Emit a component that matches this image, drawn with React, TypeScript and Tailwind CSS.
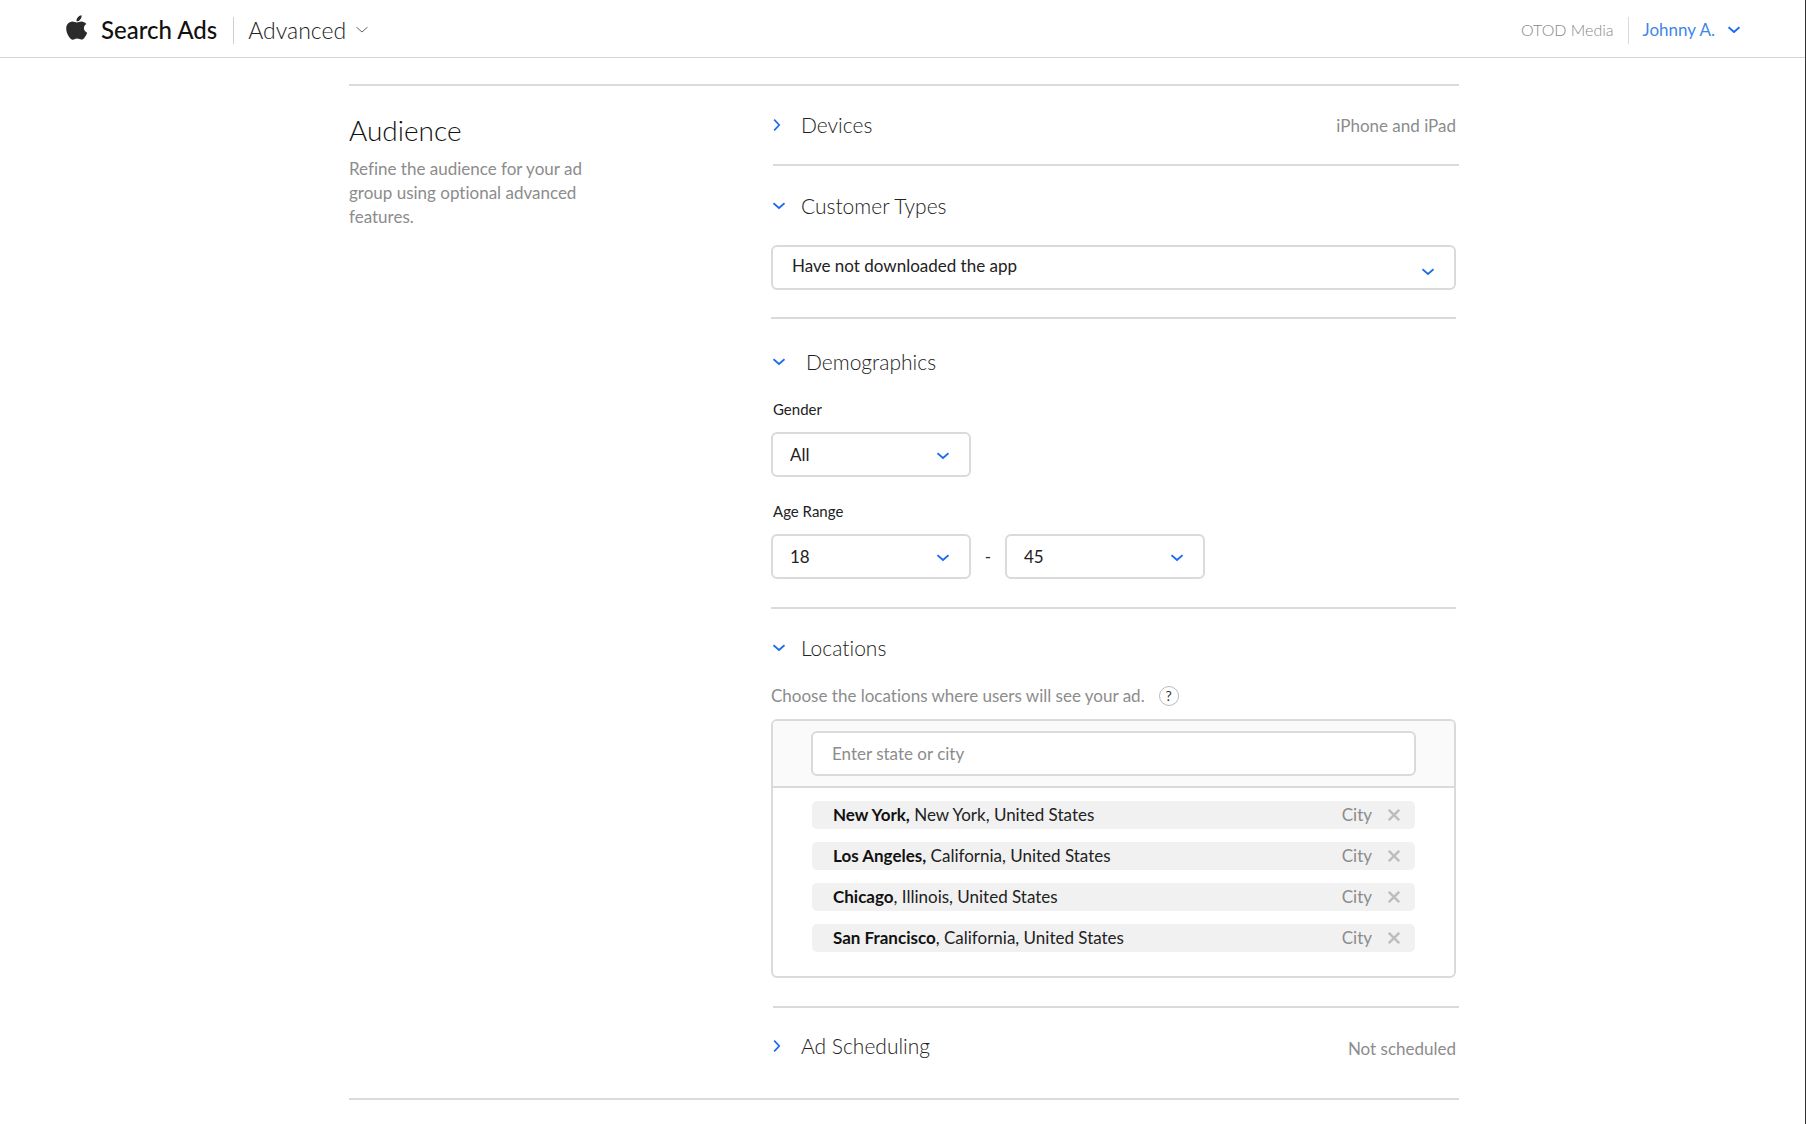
import React, { useState } from 'react'

type IconProps = { className?: string }

const AppleLogo = ({ className }: IconProps) => (
  <svg className={className} viewBox="0 0 22 26" fill="currentColor" aria-hidden="true">
    <path d="M15.6 0.2c0.2 1.6-0.4 3.1-1.3 4.2-1 1.2-2.4 2-3.8 1.9-0.2-1.5 0.5-3.1 1.4-4.1C12.800 1.100 14.400 0.300 15.600 0.200z" />
    <path d="M20.400 8.900c-1.600 1-2.500 2.400-2.500 4.200 0 2.100 1.200 3.800 3.200 4.600-0.400 1.300-1 2.500-1.800 3.700-1.100 1.600-2.200 3.200-4 3.200-1.700 0-2.200-1-4.200-1s-2.600 1-4.200 1.100c-1.700 0-3-1.700-4.100-3.300C0.500 18.100-1 12.300 1.600 8.900 2.800 7.300 4.600 6.400 6.400 6.400c1.800 0 3 1 4.500 1 1.500 0 2.400-1 4.500-1 1.900 0 3.800 0.900 5 2.500z" />
  </svg>
)

const ChevronDown = ({ className }: IconProps) => (
  <svg className={className} width="12" height="8" viewBox="0 0 12 8" fill="none" stroke="currentColor" aria-hidden="true">
    <path d="M0.500 1.200L6 6l5.500-4.800" />
  </svg>
)

const ChevronRight = ({ className }: IconProps) => (
  <svg className={className} width="8" height="12" viewBox="0 0 8 12" fill="none" stroke="currentColor" aria-hidden="true">
    <path d="M1.200 0.600L6.200 6l-5 5.400" />
  </svg>
)

const CloseIcon = () => (
  <svg width="12" height="12" viewBox="0 0 12 12" fill="none" stroke="currentColor" strokeWidth="2.4" aria-hidden="true">
    <path d="M0.800 0.800l10.400 10.400M11.200 0.800L0.800 11.200" />
  </svg>
)

const SectionTitle = ({ title, open, wide }: { title: string; open?: boolean; wide?: boolean }) => (
  <button type="button" aria-expanded={!!open} className="flex items-center text-[21px] leading-7 font-light text-[#222]">
    <span className={wide ? 'w-[35px]' : 'w-[30px]'}>
      {open ? (
        <ChevronDown className="ml-[2px] stroke-[1.7] text-[#1b6bea]" />
      ) : (
        <ChevronRight className="ml-[2px] stroke-[1.7] text-[#1b6bea]" />
      )}
    </span>
    {title}
  </button>
)

type SelectProps = {
  id: string
  label?: string
  value: string
  options: string[]
  className: string
  chevron: string
}

const SelectBox = ({ id, label, value, options, className, chevron }: SelectProps) => (
  <div className="relative">
    <select
      id={id}
      aria-label={label}
      defaultValue={value}
      className={`h-[45px] appearance-none rounded-[6px] border-2 border-[#dadada] bg-white text-[17px] text-[#222] ${className}`}
    >
      {options.map((o) => (
        <option key={o}>{o}</option>
      ))}
    </select>
    <ChevronDown className={`pointer-events-none absolute stroke-[1.7] text-[#1b6bea] ${chevron}`} />
  </div>
)

const cities = [
  { name: 'New York,', rest: ' New York, United States' },
  { name: 'Los Angeles,', rest: ' California, United States' },
  { name: 'Chicago', rest: ', Illinois, United States' },
  { name: 'San Francisco', rest: ', California, United States' },
]

const Header = () => (
  <header className="flex h-[58px] items-center border-b border-[#d6d6d6] px-[66px] pt-[3px]">
    <a href="#" className="flex items-center text-2xl font-medium text-[#111]">
      <AppleLogo className="mr-[13px] mb-[5px] h-[26px] w-[22px] text-[#2b2b2b]" />
      Search Ads
    </a>
    <span className="mr-[14px] ml-4 h-[27px] w-px bg-[#cfcfcf]" />
    <button type="button" className="flex items-center gap-[10px] text-[23px] font-light text-[#222]">
      Advanced
      <ChevronDown className="text-[#666]" />
    </button>
    <span className="ml-auto text-base font-light text-[#888]">OTOD Media</span>
    <span className="mx-[14px] h-[27px] w-px bg-[#d9d9d9]" />
    <button type="button" className="flex items-center gap-[13px] text-[17px] text-[#3f86e8]">
      Johnny A.
      <ChevronDown className="stroke-2 text-[#1b6bea]" />
    </button>
  </header>
)

const Locations = () => {
  const [list, setList] = useState(cities)
  return (
    <section className="ml-[2px] border-b-2 border-[#dadada] pt-[25px] pb-[28px]">
      <div className="-ml-[2px] mr-[3px]">
        <SectionTitle title="Locations" open />
        <div className="mt-[22px] flex items-center gap-[14px]">
          <label htmlFor="place" className="text-[17px] leading-6 text-[#8c8c8c]">
            Choose the locations where users will see your ad.
          </label>
          <button type="button" aria-label="Help" className="flex h-5 w-5 items-center justify-center rounded-full border border-[#bbb] text-sm leading-none text-[#333]">
            ?
          </button>
        </div>
        <div className="mt-[11px] overflow-hidden rounded-[6px] border-2 border-[#dadada]">
          <div className="border-b-2 border-[#dadada] bg-[#fafafa] px-[38px] py-[10px]">
            <input
              id="place"
              type="text"
              placeholder="Enter state or city"
              className="block h-[45px] w-full rounded-[6px] border-2 border-[#dadada] bg-white px-[19px] text-[17px] placeholder:text-[#8c8c8c]"
            />
          </div>
          <ul className="flex flex-col gap-[13px] px-[39px] pt-[13px] pb-[24px]">
            {list.map((c) => (
              <li key={c.name} className="flex h-[28px] items-center rounded-[5px] bg-[#f1f1f1] pr-[15px] pl-[21px] text-[17px] text-[#222]">
                <span>
                  <b className="font-bold text-[#111]">{c.name}</b>
                  {c.rest}
                </span>
                <span className="ml-auto text-[#8c8c8c]">City</span>
                <button
                  type="button"
                  aria-label={`Remove ${c.name}`}
                  className="ml-4 text-[#bdbdbd]"
                  onClick={() => setList(list.filter((x) => x !== c))}
                >
                  <CloseIcon />
                </button>
              </li>
            ))}
          </ul>
        </div>
      </div>
    </section>
  )
}

const App = () => {
  return (
    <div className="min-h-screen bg-white font-['Lato',sans-serif] [font-variant-ligatures:no-common-ligatures]">
      <Header />
      <div className="fixed inset-y-0 right-0 w-px bg-[#333]" />
      <main className="mx-auto max-w-[1112px] pt-[26px] pl-[2px]">
        <div className="grid grid-cols-[1fr_688px] border-y-2 border-[#dadada]">
          <div className="pt-[26px]">
            <h1 className="text-[28px] leading-9 font-light text-[#111]">Audience</h1>
            <p className="mt-[9px] w-[250px] text-[17px] leading-6 text-[#8c8c8c]">
              Refine the audience for your ad group using optional advanced features.
            </p>
          </div>

          <div>
            <section className="ml-[2px] border-b-2 border-[#dadada]">
              <div className="-ml-[2px] flex h-[78px] items-center justify-between pr-[3px]">
                <SectionTitle title="Devices" />
                <span className="pt-[2px] text-[17px] text-[#8c8c8c]">iPhone and iPad</span>
              </div>
            </section>

            <section className="mr-[3px] border-b-2 border-[#dadada] pt-[26px] pb-[27px]">
              <SectionTitle title="Customer Types" open />
              <div className="mt-[25px]">
                <SelectBox
                  id="customers"
                  label="Customer Types"
                  value="Have not downloaded the app"
                  options={['Have not downloaded the app', 'All users', 'Users of my other apps']}
                  className="w-full px-[19px] pb-[4px]"
                  chevron="right-[22px] bottom-[14px]"
                />
              </div>
            </section>

            <section className="mr-[3px] border-b-2 border-[#dadada] pt-[29px] pb-[28px]">
              <SectionTitle title="Demographics" open wide />
              <label htmlFor="gender" className="mt-[23px] mb-[13px] block pl-[2px] text-[15px] leading-5 text-[#222]">
                Gender
              </label>
              <SelectBox
                id="gender"
                value="All"
                options={['All', 'Female', 'Male']}
                className="w-[200px] px-[17px]"
                chevron="top-[20px] left-[166px]"
              />
              <label htmlFor="age-from" className="mt-[24px] mb-[13px] block pl-[2px] text-[15px] leading-5 text-[#222]">
                Age Range
              </label>
              <div className="flex items-center">
                <SelectBox
                  id="age-from"
                  value="18"
                  options={['18', '25', '35', '45']}
                  className="w-[200px] px-[17px]"
                  chevron="top-[20px] left-[166px]"
                />
                <span className="w-[34px] text-center text-[17px] text-[#333]">-</span>
                <SelectBox
                  id="age-to"
                  label="Age Range end"
                  value="45"
                  options={['25', '35', '45', '65+']}
                  className="w-[200px] px-[17px]"
                  chevron="top-[20px] left-[166px]"
                />
              </div>
            </section>

            <Locations />

            <div className="flex h-[90px] items-center justify-between pr-[3px] pb-[14px]">
              <SectionTitle title="Ad Scheduling" />
              <span className="pt-[6px] text-[17px] text-[#8c8c8c]">Not scheduled</span>
            </div>
          </div>
        </div>
      </main>
    </div>
  )
}

export default App
